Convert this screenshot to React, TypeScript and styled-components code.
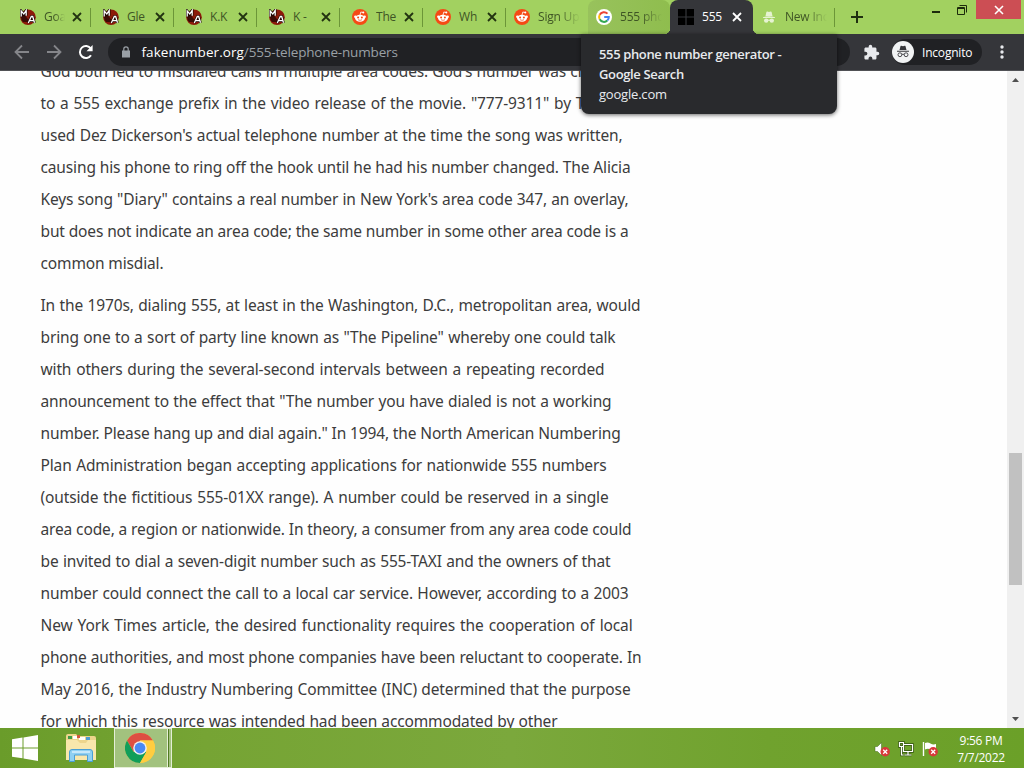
import React, { ReactNode } from 'react';
import styled, { createGlobalStyle, css } from 'styled-components';

const GlobalStyle = createGlobalStyle`
  * { box-sizing: border-box; }
  body {
    margin: 0;
    background: #fff;
    overflow: hidden;
    font-family: 'Open Sans', 'Noto Sans', sans-serif;
  }
  svg { display: block; flex: none; }
`;

const Screen = styled.div`
  width: 1024px;
  height: 768px;
  display: flex;
  flex-direction: column;
  overflow: hidden;
`;

const TabStrip = styled.div`
  height: 34px;
  flex: none;
  display: flex;
  padding-left: 8px;
  background: #a2d160;
`;

const Tab = styled.div<{ $state?: 'active' | 'hover'; $tight?: boolean; $line?: boolean; $width?: number }>`
  position: relative;
  width: ${(p) => p.$width || 83}px;
  height: 34px;
  flex: none;
  display: flex;
  align-items: center;
  padding-left: ${(p) => (p.$tight ? 8 : 12)}px;
  color: #3f5525;
  ${(p) =>
    p.$line &&
    css`
      &::after {
        content: '';
        position: absolute;
        right: 0;
        top: 8px;
        width: 1px;
        height: 19px;
        background: #6c9638;
      }
    `}
  ${(p) =>
    p.$state === 'hover' &&
    css`
      background: linear-gradient(90deg, #98c25c, #8fbd4e);
      border-radius: 8px 8px 6px 0;
    `}
  ${(p) =>
    p.$state === 'active' &&
    css`
      background: #35363a;
      color: #fff;
      border-radius: 8px 8px 0 0;
      &::before,
      &::after {
        content: '';
        position: absolute;
        bottom: 0;
        width: 6px;
        height: 6px;
      }
      &::before {
        left: -6px;
        background: radial-gradient(circle at 0 0, transparent 6px, #35363a 6.5px);
      }
      &::after {
        right: -6px;
        background: radial-gradient(circle at 100% 0, transparent 6px, #35363a 6.5px);
      }
    `}
`;

const TabTitle = styled.span<{ $width: number; $fade?: boolean }>`
  width: ${(p) => p.$width}px;
  margin-left: 8px;
  overflow: hidden;
  white-space: nowrap;
  font-size: 12px;
  letter-spacing: -0.2px;
  line-height: 20px;
  ${(p) => p.$fade && css`mask-image: linear-gradient(90deg, #000 50%, transparent);`}
`;

const TabClose = styled.span`
  margin-left: 6.5px;
`;

const NewTab = styled.div`
  width: 44px;
  display: flex;
  align-items: center;
  justify-content: center;
`;

const WindowButtons = styled.div`
  display: flex;
  margin-left: auto;
  padding-right: 3px;
`;

const WindowButton = styled.div<{ $close?: boolean }>`
  width: ${(p) => (p.$close ? 45 : 26)}px;
  height: 19px;
  display: flex;
  align-items: center;
  justify-content: center;
  padding-right: ${(p) => (p.$close ? 0 : 2)}px;
  background: ${(p) => (p.$close ? '#cc4e54' : 'none')};
`;

const Toolbar = styled.div`
  height: 37px;
  flex: none;
  display: flex;
  align-items: center;
  padding-left: 14px;
  background: #35363a;
  border-bottom: 1px solid #505155;
`;

const NavIcons = styled.div`
  width: 94px;
  display: flex;
  gap: 16px;
`;

const AddressBar = styled.div`
  width: 742px;
  height: 28px;
  display: flex;
  align-items: center;
  padding-left: 13px;
  border-radius: 14px;
  background: #202124;
  color: #9aa0a6;
  font-size: 13.5px;
`;

const Address = styled.span`
  margin-left: 10.5px;
  white-space: nowrap;
  letter-spacing: -0.17px;
`;

const Host = styled.span`
  color: #fff;
  letter-spacing: 0.05px;
`;

const MenuIcons = styled.div`
  flex: 1;
  display: flex;
  align-items: center;
  padding-left: 13px;
`;

const Profile = styled.div`
  width: 90px;
  height: 26px;
  margin: 0 18px 0 12px;
  display: flex;
  align-items: center;
  gap: 8px;
  border-radius: 13px;
  background: #202124;
  color: #fff;
  font-size: 12px;
  letter-spacing: -0.2px;
`;

const Viewport = styled.div`
  height: 657px;
  flex: none;
  display: flex;
`;

const Article = styled.main`
  flex: 1;
  overflow: hidden;
  padding-left: 40.5px;
  background: #fefefe;
  color: #3c3c3c;
  font-family: 'Noto Sans', sans-serif;
`;

const Paragraph = styled.p<{ $first?: boolean }>`
  margin: ${(p) => (p.$first ? '-16px' : '0')} 0 10px;
`;

const Line = styled.span<{ $width: number }>`
  display: block;
  width: ${(p) => p.$width}px;
  height: 32px;
  line-height: 32px;
  font-size: 15.5px;
  letter-spacing: -0.14px;
  white-space: nowrap;
  text-align: justify;
  text-align-last: justify;
`;

const Scrollbar = styled.div`
  width: 17px;
  display: flex;
  flex-direction: column;
  justify-content: space-between;
  align-items: center;
  padding: 7px 0 7px;
  background: #f0f0f0;
`;

const Thumb = styled.div`
  width: 13px;
  height: 132px;
  margin-top: 238px;
  background: #c1c1c1;
`;

const HoverCard = styled.div`
  position: absolute;
  left: 581px;
  top: 34px;
  width: 256px;
  height: 80px;
  padding: 10px 18px;
  border-radius: 0 0 8px 8px;
  background: #292a2d;
  box-shadow: 0 1px 4px rgba(0, 0, 0, 0.6);
  color: #e8eaed;
  font-size: 13px;
  letter-spacing: -0.2px;
  line-height: 20px;
  white-space: nowrap;
`;

const CardTitle = styled.div`
  font-weight: 600;
  letter-spacing: -0.36px;
`;

const Taskbar = styled.div`
  height: 40px;
  flex: none;
  display: flex;
  align-items: center;
  padding-left: 11px;
  background: linear-gradient(90deg, #6a9c2a, #76a434 20%, #7ba83c 50%, #70a22e 75%, #6ba028);
`;

const ExplorerIcon = styled.svg`
  margin-left: 26px;
`;

const ChromeButton = styled.div`
  width: 58px;
  height: 40px;
  display: flex;
  align-items: center;
  justify-content: center;
  margin-left: 17px;
  padding-right: 6px;
  border: 1px solid #e4eed6;
  background: linear-gradient(90deg, #a2c27e 52px, #e4eed6 52px, #e4eed6 53px, #527b22 53px, #527b22 54px, #a2c27e 54px);
`;

const Tray = styled.div`
  margin-left: auto;
  padding-top: 2px;
  display: flex;
  gap: 8px;
`;

const Clock = styled.div`
  width: 86px;
  padding-top: 1px;
  color: #fff;
  font-size: 12px;
  line-height: 17px;
  letter-spacing: -0.3px;
  text-align: center;
`;

const Cross = ({ color = '#223311', width = 1.8 }: { color?: string; width?: number }) => (
  <svg width="10" height="10" viewBox="0 0 10 10">
    <path d="M1 1l8 8m0-8l-8 8" stroke={color} strokeWidth={width} />
  </svg>
);

const ArchivesIcon = () => (
  <svg width="16" height="16" viewBox="0 0 16 16">
    <circle cx="8" cy="8.2" r="7.8" fill="#8c1a0a" />
    <path d="M3 13A7.7 7.7 0 0 1 3 3.4L10 13z" fill="#3a0b06" />
    <path d="M1.2 7.5V2l2.6 3 2.4-3.7v5.500M8.300 14l3-6.500h1.400l1.800 6.300M9.500 11.600h4" stroke="#190503" strokeWidth="2.600" fill="none" />
    <path d="M1.2 7.5V2l2.6 3 2.4-3.7v5.500M8.300 14l3-6.500h1.400l1.800 6.300M9.500 11.600h4" stroke="#fff" strokeWidth="1.300" fill="none" />
  </svg>
);

const RedditIcon = () => (
  <svg width="16" height="16" viewBox="0 0 16 16">
    <circle cx="8" cy="8" r="8" fill="#f54a16" />
    <path d="M8 6l.8-3 2.4.5" stroke="#fff" strokeWidth=".8" fill="none" />
    <circle cx="11.3" cy="3.6" r="1" fill="#fff" />
    <circle cx="3.4" cy="7.8" r="1.3" fill="#fff" />
    <circle cx="12.6" cy="7.8" r="1.3" fill="#fff" />
    <ellipse cx="8" cy="9.2" rx="4.9" ry="3.5" fill="#fff" />
    <circle cx="6.1" cy="8.5" r="1" fill="#f54a16" />
    <circle cx="9.9" cy="8.5" r="1" fill="#f54a16" />
    <path d="M6 10.7q2 1.3 4 0" stroke="#f54a16" strokeWidth=".7" fill="none" />
  </svg>
);

const GoogleIcon = () => (
  <svg width="16" height="16" viewBox="0 0 16 16">
    <circle cx="8" cy="8" r="8" fill="#fff" />
    <g fill="none" strokeWidth="2">
      <path d="M11.5 4.6A4.9 4.9 0 0 0 3.7 5.7" stroke="#ea4335" />
      <path d="M3.7 5.7a4.9 4.9 0 0 0 0 4.6" stroke="#fbbc05" />
      <path d="M3.7 10.3a4.9 4.9 0 0 0 7.6 1.3" stroke="#34a853" />
      <path d="M11.3 11.6A4.7 4.7 0 0 0 12.8 8H8.2" stroke="#4285f4" />
    </g>
  </svg>
);

const TilesIcon = () => (
  <svg width="16" height="16" viewBox="0 0 16 16">
    <path d="M0 0h7.400v7.400H0zM8.600 0H16v7.400H8.600zM0 8.600h7.400V16H0zM8.600 8.600H16V16H8.600z" fill="#000" />
  </svg>
);

const SpyIcon = ({ size, color }: { size: number; color: string }) => (
  <svg width={size} height={size} viewBox="0 0 16 16" fill="none" stroke={color}>
    <path d="M4 6.2l1.2-4.4q.2-.6.8-.4l2 .5 2-.5q.6-.2.8.4L12 6.2z" fill={color} stroke="none" />
    <path d="M1.2 7.6h13.6" strokeWidth="1.2" />
    <circle cx="4.5" cy="11.7" r="2.2" />
    <circle cx="11.5" cy="11.7" r="2.2" />
    <path d="M6.7 11.4q1.3-.8 2.6 0" />
  </svg>
);

const IncognitoTabIcon = () => (
  <svg width="16" height="16" viewBox="0 0 16 16" fill="#e6f3d2">
    <path d="M4.500 7l.9-4Q5.600 2.200 6.400 2.500L8 3l1.600-.5q.8-.3 1 .5l.9 4zM2 8.200q6-1.800 12 0v.8H2z" />
    <circle cx="5.200" cy="11.600" r="2.200" />
    <circle cx="10.800" cy="11.600" r="2.200" />
    <path d="M6 10.600h4v1.200H6z" />
  </svg>
);

const PuzzleIcon = () => (
  <svg width="17" height="17" viewBox="0 0 24 24" fill="#e8eaed">
    <path d="M20.500 11H19V7c0-1.100-.9-2-2-2h-4V3.500a2.500 2.500 0 0 0-5 0V5H4c-1.100 0-2 .9-2 2v3.800h1.500a2.700 2.700 0 0 1 0 5.400H2V20c0 1.100.9 2 2 2h3.800v-1.500a2.700 2.700 0 0 1 5.400 0V22H17c1.100 0 2-.9 2-2v-4h1.500a2.500 2.500 0 0 0 0-5z" />
  </svg>
);

const BadgeCross = () => (
  <g>
    <circle cx="11.200" cy="10.800" r="4.700" fill="#d8383a" />
    <path d="M9.200 8.800l4 4m0-4l-4 4" stroke="#fff" strokeWidth="1.300" />
  </g>
);

const tabs: { icon: ReactNode; title: string; width: number; fade?: boolean }[] = [
  { icon: <ArchivesIcon />, title: 'Goa', width: 21, fade: true },
  { icon: <ArchivesIcon />, title: 'Gle', width: 21 },
  { icon: <ArchivesIcon />, title: 'K.K', width: 21 },
  { icon: <ArchivesIcon />, title: 'K -', width: 21 },
  { icon: <RedditIcon />, title: 'The', width: 21 },
  { icon: <RedditIcon />, title: 'Wh', width: 21 },
];

type TextLine = [string, number];

const first: TextLine[] = [
  ["God both led to misdialed calls in multiple area codes. God's number was changed", 592],
  ['to a 555 exchange prefix in the video release of the movie. "777-9311" by The Time', 602],
  ["used Dez Dickerson's actual telephone number at the time the song was written,", 582],
  ['causing his phone to ring off the hook until he had his number changed. The Alicia', 590],
  ['Keys song "Diary" contains a real number in New York\'s area code 347, an overlay,', 588],
  ['but does not indicate an area code; the same number in some other area code is a', 588],
  ['common misdial.', 121],
];

const second: TextLine[] = [
  ['In the 1970s, dialing 555, at least in the Washington, D.C., metropolitan area, would', 600],
  ['bring one to a sort of party line known as "The Pipeline" whereby one could talk', 575],
  ['with others during the several-second intervals between a repeating recorded', 564],
  ['announcement to the effect that "The number you have dialed is not a working', 571],
  ['number. Please hang up and dial again." In 1994, the North American Numbering', 580],
  ['Plan Administration began accepting applications for nationwide 555 numbers', 566],
  ['(outside the fictitious 555-01XX range). A number could be reserved in a single', 568],
  ['area code, a region or nationwide. In theory, a consumer from any area code could', 591],
  ['be invited to dial a seven-digit number such as 555-TAXI and the owners of that', 570],
  ['number could connect the call to a local car service. However, according to a 2003', 588],
  ['New York Times article, the desired functionality requires the cooperation of local', 592],
  ['phone authorities, and most phone companies have been reluctant to cooperate. In', 601],
  ['May 2016, the Industry Numbering Committee (INC) determined that the purpose', 590],
  ['for which this resource was intended had been accommodated by other', 517],
];

const renderLines = (lines: TextLine[]) =>
  lines.map(([text, width]) => (
    <Line key={text} $width={width}>
      {text}
    </Line>
  ));

export default function App() {
  return (
    <Screen>
      <GlobalStyle />
      <TabStrip>
        {tabs.map((t) => (
          <Tab key={t.title} $line>
            {t.icon}
            <TabTitle $width={t.width} $fade={t.fade}>{t.title}</TabTitle>
            <TabClose><Cross /></TabClose>
          </Tab>
        ))}
        <Tab $tight $width={82}>
          <RedditIcon />
          <TabTitle $width={42} $fade>Sign Up</TabTitle>
        </Tab>
        <Tab $tight $state="hover" $width={82}>
          <GoogleIcon />
          <TabTitle $width={42} $fade>555 phon</TabTitle>
        </Tab>
        <Tab $tight $state="active">
          <TilesIcon />
          <TabTitle $width={23}>555</TabTitle>
          <TabClose><Cross color="#fff" /></TabClose>
        </Tab>
        <Tab $tight $line $width={82}>
          <IncognitoTabIcon />
          <TabTitle $width={42} $fade>New Inco</TabTitle>
        </Tab>
        <NewTab>
          <svg width="12" height="12" viewBox="0 0 12 12">
            <path d="M6 0v12M0 6h12" stroke="#203010" strokeWidth="2" />
          </svg>
        </NewTab>
        <WindowButtons>
          <WindowButton>
            <svg width="8" height="19"><path d="M0 12h8" stroke="#1c2a0c" strokeWidth="2" /></svg>
          </WindowButton>
          <WindowButton>
            <svg width="10" height="10" viewBox="0 0 10 10" fill="none" stroke="#1c2a0c">
              <path d="M.5 2.500h7v7h-7zM2.500 .5h7V7.500M.5 3.500h7" />
            </svg>
          </WindowButton>
          <WindowButton $close><Cross color="#fff" width={1.6} /></WindowButton>
        </WindowButtons>
      </TabStrip>

      <Toolbar>
        <NavIcons>
          <svg width="16" height="16" viewBox="0 0 16 16" fill="none" stroke="#85868a" strokeWidth="1.800">
            <path d="M15 8H2M8 1.500L1.500 8 8 14.500" />
          </svg>
          <svg width="16" height="16" viewBox="0 0 16 16" fill="none" stroke="#85868a" strokeWidth="1.800">
            <path d="M1 8h13M8 1.500L14.500 8 8 14.500" />
          </svg>
          <svg width="16" height="16" viewBox="0 0 16 16">
            <path d="M13 11.200A6 6 0 1 1 12.800 4.500" fill="none" stroke="#fff" strokeWidth="2" />
            <path d="M14.600 1v6.200H8.500z" fill="#fff" />
          </svg>
        </NavIcons>
        <AddressBar>
          <svg width="10" height="12" viewBox="0 0 10 12">
            <path d="M1 4.500h8v7H1z" fill="#9aa0a6" />
            <path d="M2.800 5V3a2.200 2.200 0 0 1 4.400 0v2" stroke="#9aa0a6" strokeWidth="1.200" fill="none" />
          </svg>
          <Address><Host>fakenumber.org</Host>/555-telephone-numbers</Address>
        </AddressBar>
        <MenuIcons>
          <PuzzleIcon />
          <Profile>
            <svg width="22" height="22" viewBox="0 0 22 22">
              <circle cx="11" cy="11" r="11" fill="#f1f3f4" />
              <g transform="translate(4 3.500)"><SpyIcon size={14} color="#35363a" /></g>
            </svg>
            Incognito
          </Profile>
          <svg width="4" height="14" fill="#e8eaed">
            <circle cx="2" cy="2" r="1.700" />
            <circle cx="2" cy="7" r="1.700" />
            <circle cx="2" cy="12" r="1.700" />
          </svg>
        </MenuIcons>
      </Toolbar>

      <Viewport>
        <Article>
          <Paragraph $first>{renderLines(first)}</Paragraph>
          <Paragraph>{renderLines(second)}</Paragraph>
        </Article>
        <Scrollbar>
          <svg width="7" height="4"><path d="M0 4l3.500-4L7 4z" fill="#505050" /></svg>
          <Thumb />
          <svg width="7" height="4"><path d="M0 0l3.500 4L7 0z" fill="#505050" /></svg>
        </Scrollbar>
      </Viewport>

      <Taskbar>
        <svg width="28" height="26" viewBox="0 0 28 26" fill="#fff">
          <path d="M1 4.200l10.500-1.600v9.800H1zM12.500 2.400L27 0v12.400H12.500zM1 13.400h10.500v9.800L1 21.700zM12.500 13.400H27V26l-14.500-2.500z" />
        </svg>
        <ExplorerIcon width="32" height="30" viewBox="0 0 32 30">
          <path d="M1 3q0-2 2-2h8l2 2h16q2 0 2 2v20H1z" fill="#ecd58c" />
          <path d="M3 3h4v3H3z" fill="#3f9a48" />
          <path d="M8 3h4v3H8zM14 4h6v3h-6z" fill="#fff" />
          <path d="M12 2h3v3h-3z" fill="#d4573c" />
          <path d="M21 4h4v3h-4z" fill="#4f9bd0" />
          <path d="M1 7h11l3 3h6l2-3h8v20H1z" fill="#f8e7ac" />
          <path d="M4.500 28.500V19q0-2.500 2.500-2.500h18q2.500 0 2.500 2.500v9.500h-5V22h-13v6.500z" fill="#8fd0f2" stroke="#4a9fd4" />
          <path d="M7 19h18" stroke="#d8f0fc" strokeWidth="1.500" />
        </ExplorerIcon>
        <ChromeButton>
          <svg width="30" height="30" viewBox="0 0 30 30">
            <circle cx="15" cy="15" r="15" fill="#ffcd40" />
            <path d="M2 7.500A15 15 0 0 1 28 7.500H15L8.500 18.800z" fill="#dd4f43" />
            <path d="M2 7.500A15 15 0 0 0 15 30l6.500-11.200L8.500 18.700z" fill="#119e5a" />
            <path d="M28 7.500H15l6.500 11.200L15 30A15 15 0 0 0 28 7.500z" fill="#ffcd40" />
            <circle cx="15" cy="15" r="6.800" fill="#f1f1f1" />
            <circle cx="15" cy="15" r="5.400" fill="#4a89f3" />
          </svg>
        </ChromeButton>
        <Tray>
          <svg width="16" height="16" viewBox="0 0 16 16">
            <path d="M1 5.500h2.500l4-4v13l-4-4H1z" fill="#fff" stroke="#3f6414" strokeWidth=".5" />
            <BadgeCross />
          </svg>
          <svg width="16" height="16" viewBox="0 0 16 16" fill="none">
            <path d="M5.500 3.500h9v7h-9zM10 10.500V14M6.500 14h7M1.500 1.500h4v4h-4zM3.500 5.500V14h2" stroke="#32520f" strokeWidth="2.600" />
            <path d="M5.500 3.500h9v7h-9zM10 10.500V14M6.500 14h7M1.500 1.500h4v4h-4zM3.500 5.500V14h2" stroke="#fff" strokeWidth="1.200" />
          </svg>
          <svg width="16" height="16" viewBox="0 0 16 16">
            <path d="M1.500 1v14" stroke="#fff" strokeWidth="1.400" />
            <path d="M3 2q3-1 5.500.5T14 3v6q-3 1-5.500-.5T3 8.500z" fill="#fff" />
            <BadgeCross />
          </svg>
        </Tray>
        <Clock>
          9:56 PM
          <br />
          7/7/2022
        </Clock>
      </Taskbar>

      <HoverCard>
        <CardTitle>555 phone number generator -</CardTitle>
        <CardTitle>Google Search</CardTitle>
        google.com
      </HoverCard>
    </Screen>
  );
}
